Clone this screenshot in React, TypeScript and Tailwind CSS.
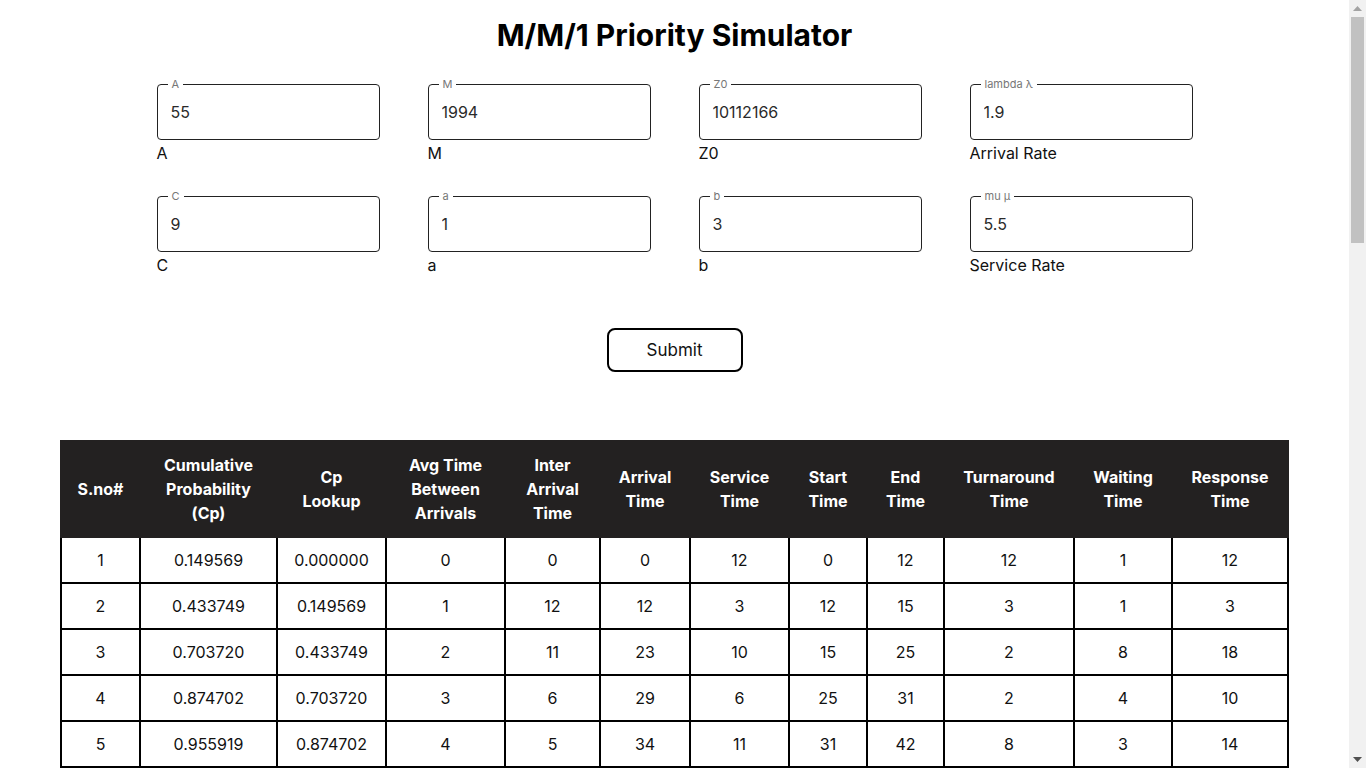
const fields = [
    { legend: 'A', value: '55', label: 'A' },
    { legend: 'M', value: '1994', label: 'M' },
    { legend: 'Z0', value: '10112166', label: 'Z0' },
    { legend: 'lambda λ', value: '1.9', label: 'Arrival Rate' },
    { legend: 'C', value: '9', label: 'C' },
    { legend: 'a', value: '1', label: 'a' },
    { legend: 'b', value: '3', label: 'b' },
    { legend: 'mu μ', value: '5.5', label: 'Service Rate' },
];

const headers = [
    { title: 'S.no#', w: 'w-[79px]' },
    { title: 'Cumulative Probability (Cp)', w: 'w-[137px]' },
    { title: 'Cp Lookup', w: 'w-[109px]' },
    { title: 'Avg Time Between Arrivals', w: 'w-[119px]' },
    { title: 'Inter Arrival Time', w: 'w-[95px]' },
    { title: 'Arrival Time', w: 'w-[90px]' },
    { title: 'Service Time', w: 'w-[99px]' },
    { title: 'Start Time', w: 'w-[78px]' },
    { title: 'End Time', w: 'w-[77px]' },
    { title: 'Turnaround Time', w: 'w-[130px]' },
    { title: 'Waiting Time', w: 'w-[98px]' },
    { title: 'Response Time', w: 'w-[116px]' },
];

const rows = [
    ['1', '0.149569', '0.000000', '0', '0', '0', '12', '0', '12', '12', '1', '12'],
    ['2', '0.433749', '0.149569', '1', '12', '12', '3', '12', '15', '3', '1', '3'],
    ['3', '0.703720', '0.433749', '2', '11', '23', '10', '15', '25', '2', '8', '18'],
    ['4', '0.874702', '0.703720', '3', '6', '29', '6', '25', '31', '2', '4', '10'],
    ['5', '0.955919', '0.874702', '4', '5', '34', '11', '31', '42', '8', '3', '14'],
    ['6', '0.986781', '0.955919', '5', '3', '37', '2', '42', '44', '7', '2', '5'],
    ['7', '0.996554', '0.986781', '6', '9', '46', '7', '46', '53', '7', '1', '7'],
    ['8', '0.999207', '0.996554', '7', '4', '50', '5', '53', '58', '8', '3', '8'],
    ['9', '0.999837', '0.999207', '8', '2', '52', '9', '58', '67', '15', '2', '15'],
    ['10', '0.999970', '0.999837', '9', '7', '59', '4', '67', '71', '12', '1', '12'],
    ['11', '0.999995', '0.999970', '10', '1', '60', '8', '71', '79', '19', '3', '19'],
    ['12', '0.999999', '0.999995', '11', '6', '66', '3', '79', '82', '16', '2', '16'],
    ['13', '1.000000', '0.999999', '12', '5', '71', '6', '82', '88', '17', '1', '17'],
];

const Field = ({ legend, value, label }: { legend: string; value: string; label: string }) => (
    <div className="flex flex-col">
        <div className="relative h-[56px] rounded border border-[#222] px-[13px] flex items-center">
            <span className="absolute left-[10px] -top-[8px] bg-white px-[4px] text-[11px] leading-[14px] text-[#777]">
                {legend}
            </span>
            <input
                readOnly
                value={value}
                className="w-full bg-transparent text-[16px] text-[#2a2a2a] outline-none"
            />
        </div>
        <span className="mt-[1px] text-[16px] leading-6 text-[#111]">{label}</span>
    </div>
);

// fake page scrollbar, as in the reference capture
const ScrollBar = () => (
    <div className="flex w-[17px] shrink-0 flex-col bg-[#f1f1f1]">
        <div className="flex h-[17px] items-center justify-center">
            <svg width="9" height="5" viewBox="0 0 9 5"><path d="M4.5 0L9 5H0z" fill="#a3a3a3" /></svg>
        </div>
        <div className="mx-[2px] h-[226px] bg-[#c1c1c1]" />
        <div className="flex-1" />
        <div className="flex h-[17px] items-center justify-center">
            <svg width="9" height="5" viewBox="0 0 9 5"><path d="M0 0h9L4.5 5z" fill="#505050" /></svg>
        </div>
    </div>
);

const App = () => {
    return (
        <div className="flex h-screen bg-white font-['Inter',sans-serif] text-[#111]">
            <div className="flex-1 overflow-y-auto [scrollbar-width:none]">
                <div className="pb-16">
                    <h1 className="pt-[17px] text-center text-[30px] font-bold leading-9 text-black">
                        M/M/1 Priority Simulator
                    </h1>

                    <div className="mx-auto mt-[31px] grid w-[1036px] grid-cols-4 gap-x-[48px] gap-y-[31px]">
                        {fields.map((f) => (
                            <Field key={f.legend} {...f} />
                        ))}
                    </div>

                    <div className="mt-[51px] flex justify-center">
                        <button className="h-[44px] w-[136px] rounded-lg border-2 border-black bg-white pt-[2px] text-[17px] text-[#111]">
                            Submit
                        </button>
                    </div>

                    <div className="mt-[68px] pl-[60px] pr-[62px]">
                        <table className="w-full table-fixed border-collapse text-center text-[16px]">
                            <thead>
                                <tr className="bg-[#232121] text-white">
                                    {headers.map((h) => (
                                        <th key={h.title} className={`${h.w} border-2 border-[#232121] px-[14px] py-[11px] font-bold leading-6`}>
                                            {h.title}
                                        </th>
                                    ))}
                                </tr>
                            </thead>
                            <tbody>
                                {rows.map((r) => (
                                    <tr key={r[0]}>
                                        {r.map((c, i) => (
                                            <td key={i} className="border-2 border-black py-[10px] leading-6 text-[#111]">
                                                {c}
                                            </td>
                                        ))}
                                    </tr>
                                ))}
                            </tbody>
                        </table>
                    </div>
                </div>
            </div>
            <ScrollBar />
        </div>
    );
};

export default App;
